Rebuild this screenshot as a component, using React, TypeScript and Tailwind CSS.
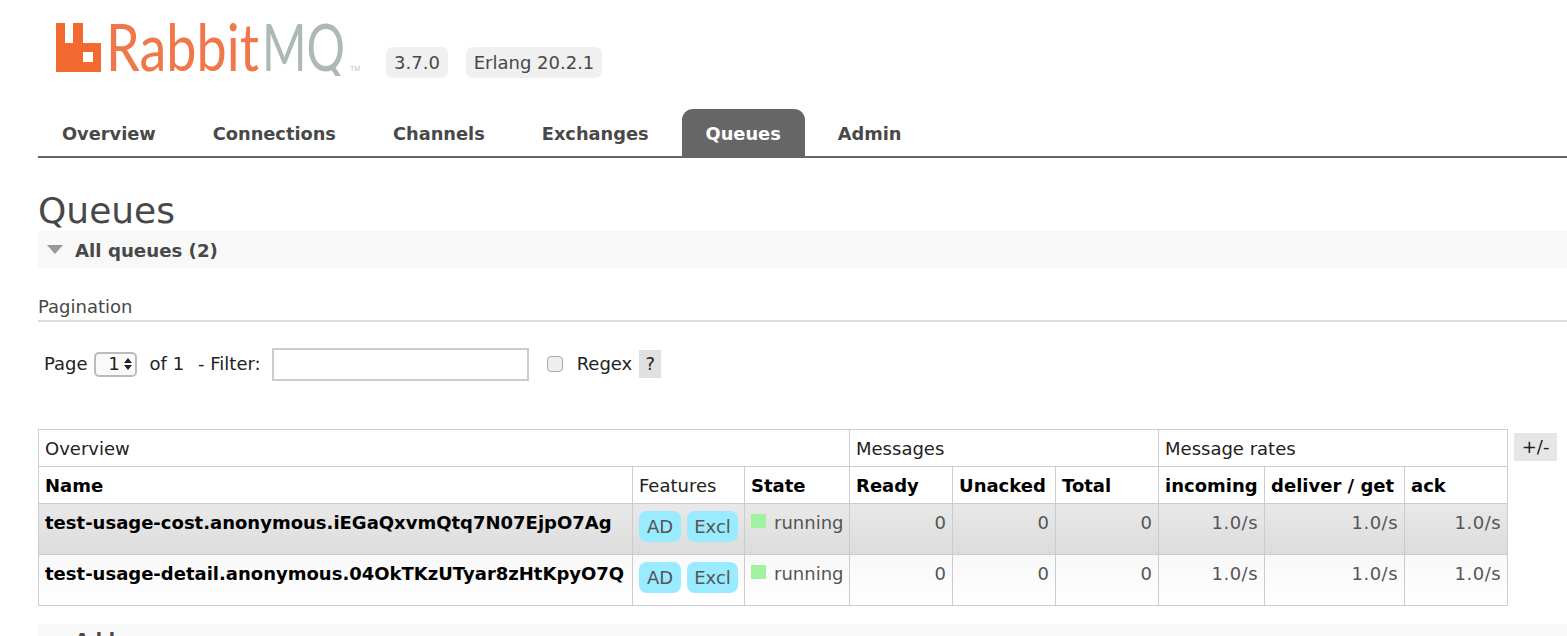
const tabs = ["Overview", "Connections", "Channels", "Exchanges", "Queues", "Admin"];

const rows = [
  { name: "test-usage-cost.anonymous.iEGaQxvmQtq7N07EjpO7Ag", rowClass: "bg-gradient-to-b from-[#e9e9e9] to-[#dcdcdc]" },
  { name: "test-usage-detail.anonymous.04OkTKzUTyar8zHtKpyO7Q", rowClass: "bg-gradient-to-b from-[#f8f8f8] to-[#ffffff]" },
];

const th = "border border-[#ccc] px-[6px] pt-[2px] text-left align-middle font-normal";
const td = "border border-[#ccc] px-[6px] pt-[9px] align-top";
const num = td + " text-right text-[#555]";
const rate = num + " tracking-[0.5px]";

function Logo() {
  return (
    <svg width="310" height="56" viewBox="50 20 310 56" className="block">
      <path
        fillRule="evenodd"
        fill="#f26a32"
        d="M56 23H65V43H73V23H83V43H101V72H56ZM83 52V62H93V52Z"
      />
      <text x="106" y="71" fontFamily="Lato, 'Open Sans', sans-serif" fontWeight="400" fontSize="66" fill="#f0774a" textLength="153" lengthAdjust="spacingAndGlyphs">
        Rabbit
      </text>
      <text x="262" y="71" fontFamily="Lato, 'Open Sans', sans-serif" fontWeight="400" fontSize="66" fill="#adbab4" textLength="83" lengthAdjust="spacingAndGlyphs">
        MQ
      </text>
      <text x="350" y="71" fontFamily="'Liberation Sans', sans-serif" fontSize="7" fill="#b9c2be">
        TM
      </text>
    </svg>
  );
}

function Section({ title, nudge }: { title: string; nudge: string }) {
  return (
    <div className="flex h-[37px] items-center bg-[#f8f8f8]">
      <span className="ml-[9px] h-0 w-0 border-x-[8.5px] border-t-[9px] border-x-transparent border-t-[#999]" />
      <span className={"ml-[12px] text-[18.2px] font-bold text-[#484848] " + nudge}>{title}</span>
    </div>
  );
}

export default function App() {
  return (
    <div className="h-[636px] w-[1567px] overflow-hidden bg-white pl-[38px] text-[18px] leading-[20px] text-[#484848] [font-family:'DejaVu_Sans',sans-serif]">
      {/* header */}
      <div className="flex h-[109px] items-start">
        <div className="ml-[12px] mt-[20px]">
          <Logo />
        </div>
        <div className="ml-[26px] mt-[47px] flex gap-[18px]">
          <span className="flex h-[31px] w-[62px] items-center justify-center rounded-[7px] bg-[#f0f0f0]">3.7.0</span>
          <span className="flex h-[31px] w-[136px] items-center justify-center rounded-[7px] bg-[#f0f0f0]">Erlang 20.2.1</span>
        </div>
      </div>

      {/* tabs */}
      <div className="flex h-[49px] gap-[9px] border-b-2 border-[#666]">
        {tabs.map((t) => (
          <div
            key={t}
            className={
              "flex h-[47px] items-center rounded-t-[11px] px-[24px] pt-[2px] text-[17.8px] font-bold " +
              (t === "Queues" ? "bg-[#666] text-white" : "text-[#484848]")
            }
          >
            {t}
          </div>
        ))}
      </div>

      <h1 className="mt-[27px] h-[46px] text-[36px] leading-[52px] font-normal text-[#484848]">Queues</h1>
      <Section title="All queues (2)" nudge="pt-[2px]" />

      {/* pagination */}
      <div className="mt-[29px] h-[25px] border-b-2 border-[#ddd]">Pagination</div>

      <div className="mt-[25px] flex h-[34px] items-center text-[#222]">
        <span className="ml-[6px]">Page</span>
        <span className="ml-[6px] flex h-[25px] w-[43px] items-center justify-end rounded-[5px] border-2 border-[#bbb] bg-[#fafafa] pr-[3px]">
          <span className="mr-[4px]">1</span>
          <span className="flex flex-col gap-[2px]">
            <span className="h-0 w-0 border-x-[4px] border-b-[5px] border-x-transparent border-b-[#222]" />
            <span className="h-0 w-0 border-x-[4px] border-t-[5px] border-x-transparent border-t-[#222]" />
          </span>
        </span>
        <span className="ml-[13px]">of 1</span>
        <span className="ml-[14px]">- Filter:</span>
        <input className="ml-[11px] h-[33px] w-[257px] border-2 border-[#ccc] bg-white outline-none" />
        <input type="checkbox" className="ml-[18px] h-[16px] w-[16px] appearance-none rounded-[4px] border border-[#aaa] bg-[#eee]" />
        <span className="ml-[14px]">Regex</span>
        <span className="ml-[7px] flex h-[28px] w-[22px] items-center justify-center bg-[#e0e0e0]">?</span>
      </div>

      {/* table and column toggle */}
      <div className="mt-[48px] flex items-start">
        <table className="w-[1469px] table-fixed border-collapse leading-[20px] text-black">
          <colgroup>
            <col className="w-[594px]" />
            <col className="w-[112px]" />
            <col className="w-[105px]" />
            <col className="w-[103px]" />
            <col className="w-[103px]" />
            <col className="w-[103px]" />
            <col className="w-[106px]" />
            <col className="w-[140px]" />
            <col className="w-[103px]" />
          </colgroup>
          <thead>
            <tr className="h-[37px] text-[#222]">
              <th colSpan={3} className={th}>Overview</th>
              <th colSpan={3} className={th}>Messages</th>
              <th colSpan={3} className={th}>Message rates</th>
            </tr>
            <tr className="h-[37px]">
              <th className={th + " !font-bold"}>Name</th>
              <th className={th + " text-[#222]"}>Features</th>
              <th className={th + " !font-bold"}>State</th>
              <th className={th + " !font-bold"}>Ready</th>
              <th className={th + " !font-bold"}>Unacked</th>
              <th className={th + " !font-bold"}>Total</th>
              <th className={th + " !font-bold"}>incoming</th>
              <th className={th + " !font-bold"}>deliver / get</th>
              <th className={th + " !font-bold"}>ack</th>
            </tr>
          </thead>
          <tbody>
            {rows.map((r) => (
              <tr key={r.name} className={"h-[51px] " + r.rowClass}>
                <td className={td + " whitespace-nowrap font-bold"}>{r.name}</td>
                <td className="border border-[#ccc] px-[6px] pt-[7px] align-top">
                  <div className="flex gap-[6px] text-[#555]">
                    <span className="flex h-[31px] w-[42px] items-center justify-center rounded-[8px] bg-[#99ebff]">AD</span>
                    <span className="flex h-[31px] w-[51px] items-center justify-center rounded-[8px] bg-[#99ebff]">Excl</span>
                  </div>
                </td>
                <td className={td + " whitespace-nowrap text-[#555]"}>
                  <span className="mr-[8px] inline-block h-[14px] w-[15px] bg-[#a0f2a0] align-[1px]" />
                  running
                </td>
                <td className={num}>0</td>
                <td className={num}>0</td>
                <td className={num}>0</td>
                <td className={rate}>1.0/s</td>
                <td className={rate}>1.0/s</td>
                <td className={rate}>1.0/s</td>
              </tr>
            ))}
          </tbody>
        </table>
        <span className="ml-[6px] mt-[4px] flex h-[28px] w-[43px] items-center justify-center bg-[#e6e6e6] text-[#222]">+/-</span>
      </div>

      <div className="mt-[18px]">
        <Section title="Add a new queue" nudge="pb-[6px]" />
      </div>
    </div>
  );
}
